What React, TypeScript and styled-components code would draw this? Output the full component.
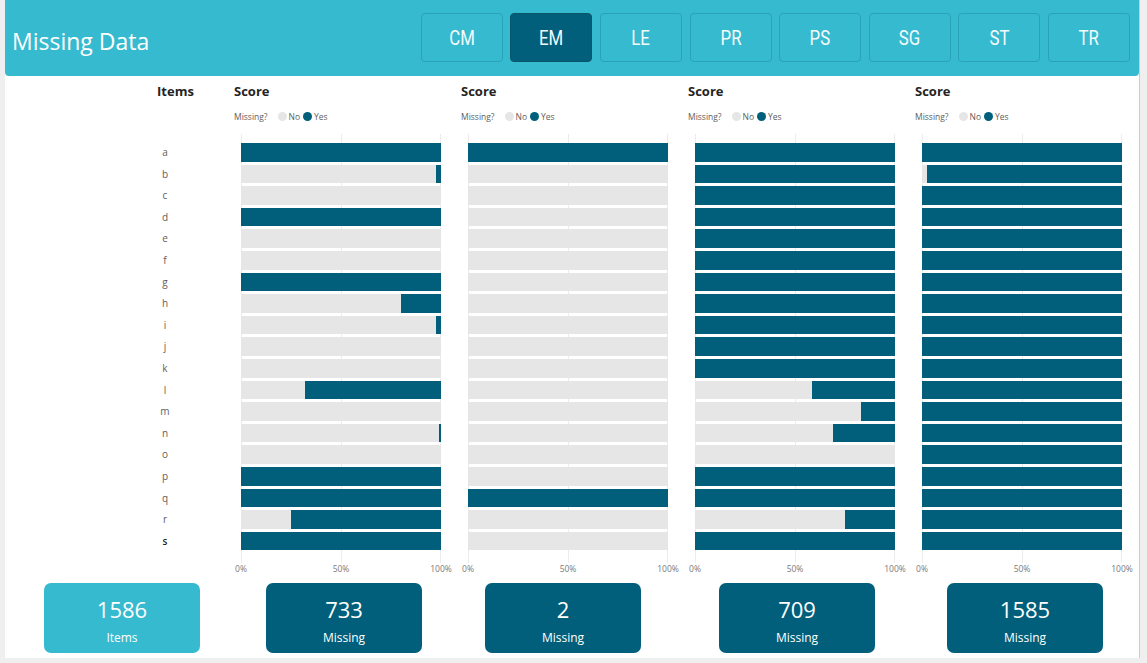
import * as React from 'react'
import styled, { createGlobalStyle } from 'styled-components'

const TEAL = '#36bacf'
const DARK = '#015f7b'
const GREY = '#e6e6e6'

const GlobalStyle = createGlobalStyle`
  html, body {
    margin: 0;
    padding: 0;
    background: #efefef;
    font-family: 'Open Sans', 'Noto Sans', sans-serif;
  }
`

const items = 'abcdefghijklmnopqrs'.split('')

// share of "Yes" (missing) per item, per chart
const charts: number[][] = [
  [1, 0.025, 0, 1, 0, 0, 1, 0.2, 0.025, 0, 0, 0.68, 0, 0.01, 0, 1, 1, 0.75, 1],
  [1, 0, 0, 0, 0, 0, 0, 0, 0, 0, 0, 0, 0, 0, 0, 0, 1, 0, 0],
  [1, 1, 1, 1, 1, 1, 1, 1, 1, 1, 1, 0.415, 0.17, 0.31, 0, 1, 1, 0.25, 1],
  [1, 0.975, 1, 1, 1, 1, 1, 1, 1, 1, 1, 1, 1, 1, 1, 1, 1, 1, 1],
]

const tabs = ['CM', 'EM', 'LE', 'PR', 'PS', 'SG', 'ST', 'TR']

const kpis = [
  { value: '1586', label: 'Items', tone: 'light', offset: 39 },
  { value: '733', label: 'Missing', tone: 'dark', offset: 66 },
  { value: '2', label: 'Missing', tone: 'dark', offset: 63 },
  { value: '709', label: 'Missing', tone: 'dark', offset: 78 },
  { value: '1585', label: 'Missing', tone: 'dark', offset: 72 },
]

const Panel = styled.div`
  margin-left: 5px;
  width: 1134px;
  height: 658px;
  background: #ffffff;
  border-right: 1px solid #cdcdcd;
  display: flex;
  flex-direction: column;
`

const Header = styled.header`
  height: 76px;
  background: ${TEAL};
  border-radius: 0 0 4px 4px;
  display: flex;
  align-items: center;
  justify-content: space-between;
  padding: 0 9px 0 7px;
`

const Title = styled.h1`
  margin: 0;
  padding-top: 6px;
  font-size: 23px;
  font-weight: 400;
  color: #ffffff;
`

const Tabs = styled.div`
  display: flex;
  gap: 7.6px;
  margin-top: -1px;
`

const Tab = styled.button<{ $active?: boolean }>`
  width: 82px;
  height: 49px;
  border: 1px solid ${({ $active }) => ($active ? '#0a5569' : '#2aa2b7')};
  border-radius: 4px;
  background: ${({ $active }) => ($active ? DARK : TEAL)};
  color: #f4fbfc;
  font-family: Roboto, 'Liberation Sans', sans-serif;
  font-size: 21px;
  padding: 0;
  cursor: pointer;
  display: flex;
  align-items: center;
  justify-content: center;
`

const TabText = styled.span`
  display: inline-block;
  transform: scaleX(0.8);
`

const Body = styled.div`
  display: grid;
  grid-template-columns: 229px repeat(4, 227px);
  padding-top: 7px;
`

const Column = styled.div`
  display: flex;
  flex-direction: column;
`

const ColTitle = styled.div<{ $indent?: number }>`
  height: 17px;
  line-height: 17px;
  font-size: 13px;
  font-weight: 700;
  color: #252423;
  padding-left: ${({ $indent }) => $indent || 0}px;
`

const Legend = styled.div`
  margin-top: 10px;
  height: 12px;
  display: flex;
  align-items: center;
  font-size: 8.5px;
  color: #605e5c;
`

const LegendKey = styled.span`
  margin-left: 10px;
  display: flex;
  align-items: center;
  & + & {
    margin-left: 3px;
  }
`

const Dot = styled.span<{ $color: string }>`
  width: 9px;
  height: 9px;
  border-radius: 50%;
  background: ${({ $color }) => $color};
  margin-right: 2px;
`

const Plot = styled.div`
  margin-top: 12px;
  margin-left: 7px;
  width: 200px;
  padding: 9px 0 13px;
  display: flex;
  flex-direction: column;
  gap: 3px;
  background:
    linear-gradient(#ececec, #ececec) 0 0 / 1px 100% no-repeat,
    linear-gradient(#ececec, #ececec) 100px 0 / 1px 100% no-repeat,
    linear-gradient(#ececec, #ececec) 199px 0 / 1px 100% no-repeat;
`

const Labels = styled.div`
  margin-top: 12px;
  margin-left: 152px;
  width: 16px;
  padding: 9px 0 13px;
  display: flex;
  flex-direction: column;
  gap: 3px;
`

const ItemLabel = styled.div<{ $strong?: boolean }>`
  height: 18.6px;
  line-height: 18.6px;
  text-align: center;
  font-size: 10px;
  color: ${({ $strong }) => ($strong ? '#252423' : '#605e5c')};
  font-weight: ${({ $strong }) => ($strong ? 600 : 400)};
`

const Bar = styled.div`
  height: 18.6px;
  background: ${GREY};
  display: flex;
  justify-content: flex-end;
`

const BarFill = styled.div`
  height: 100%;
  background: ${DARK};
`

const Axis = styled.div`
  margin-left: 7px;
  width: 200px;
  height: 12px;
  display: flex;
  justify-content: space-between;
`

const Tick = styled.span`
  width: 0;
  display: flex;
  justify-content: center;
  white-space: nowrap;
  font-size: 8.5px;
  line-height: 12px;
  color: #7a7a7a;
`

const KpiRow = styled.div`
  display: flex;
  margin-top: 8px;
`

const Kpi = styled.div<{ $tone: string; $offset: number }>`
  margin-left: ${({ $offset }) => $offset}px;
  width: 156px;
  height: 70px;
  border-radius: 7px;
  background: ${({ $tone }) => ($tone === 'light' ? TEAL : DARK)};
  color: #ffffff;
  display: flex;
  flex-direction: column;
  align-items: center;
  padding-top: 11px;
  box-sizing: border-box;
`

const KpiValue = styled.div`
  font-size: 22px;
  line-height: 30px;
`

const KpiLabel = styled.div`
  font-size: 12px;
  line-height: 16px;
  margin-top: 6px;
`

const Chart = ({ values }: { values: number[] }) => (
  <Column>
    <ColTitle>Score</ColTitle>
    <Legend>
      Missing?
      <LegendKey>
        <Dot $color={GREY} />
        No
      </LegendKey>
      <LegendKey>
        <Dot $color={DARK} />
        Yes
      </LegendKey>
    </Legend>
    <Plot>
      {values.map((v, i) => (
        <Bar key={i}>
          <BarFill style={{ width: `${v * 100}%` }} />
        </Bar>
      ))}
    </Plot>
    <Axis>
      <Tick>0%</Tick>
      <Tick>50%</Tick>
      <Tick>100%</Tick>
    </Axis>
  </Column>
)

export default function App() {
  return (
    <>
      <GlobalStyle />
      <Panel>
        <Header>
          <Title>Missing Data</Title>
          <Tabs>
            {tabs.map(t => (
              <Tab key={t} $active={t === 'EM'}>
                <TabText>{t}</TabText>
              </Tab>
            ))}
          </Tabs>
        </Header>
        <Body>
          <Column>
            <ColTitle $indent={152}>Items</ColTitle>
            <Legend />
            <Labels>
              {items.map(it => (
                <ItemLabel key={it} $strong={it === 's'}>
                  {it}
                </ItemLabel>
              ))}
            </Labels>
          </Column>
          {charts.map((values, i) => (
            <Chart key={i} values={values} />
          ))}
        </Body>
        <KpiRow>
          {kpis.map((k, i) => (
            <Kpi key={i} $tone={k.tone} $offset={k.offset}>
              <KpiValue>{k.value}</KpiValue>
              <KpiLabel>{k.label}</KpiLabel>
            </Kpi>
          ))}
        </KpiRow>
      </Panel>
    </>
  )
}
